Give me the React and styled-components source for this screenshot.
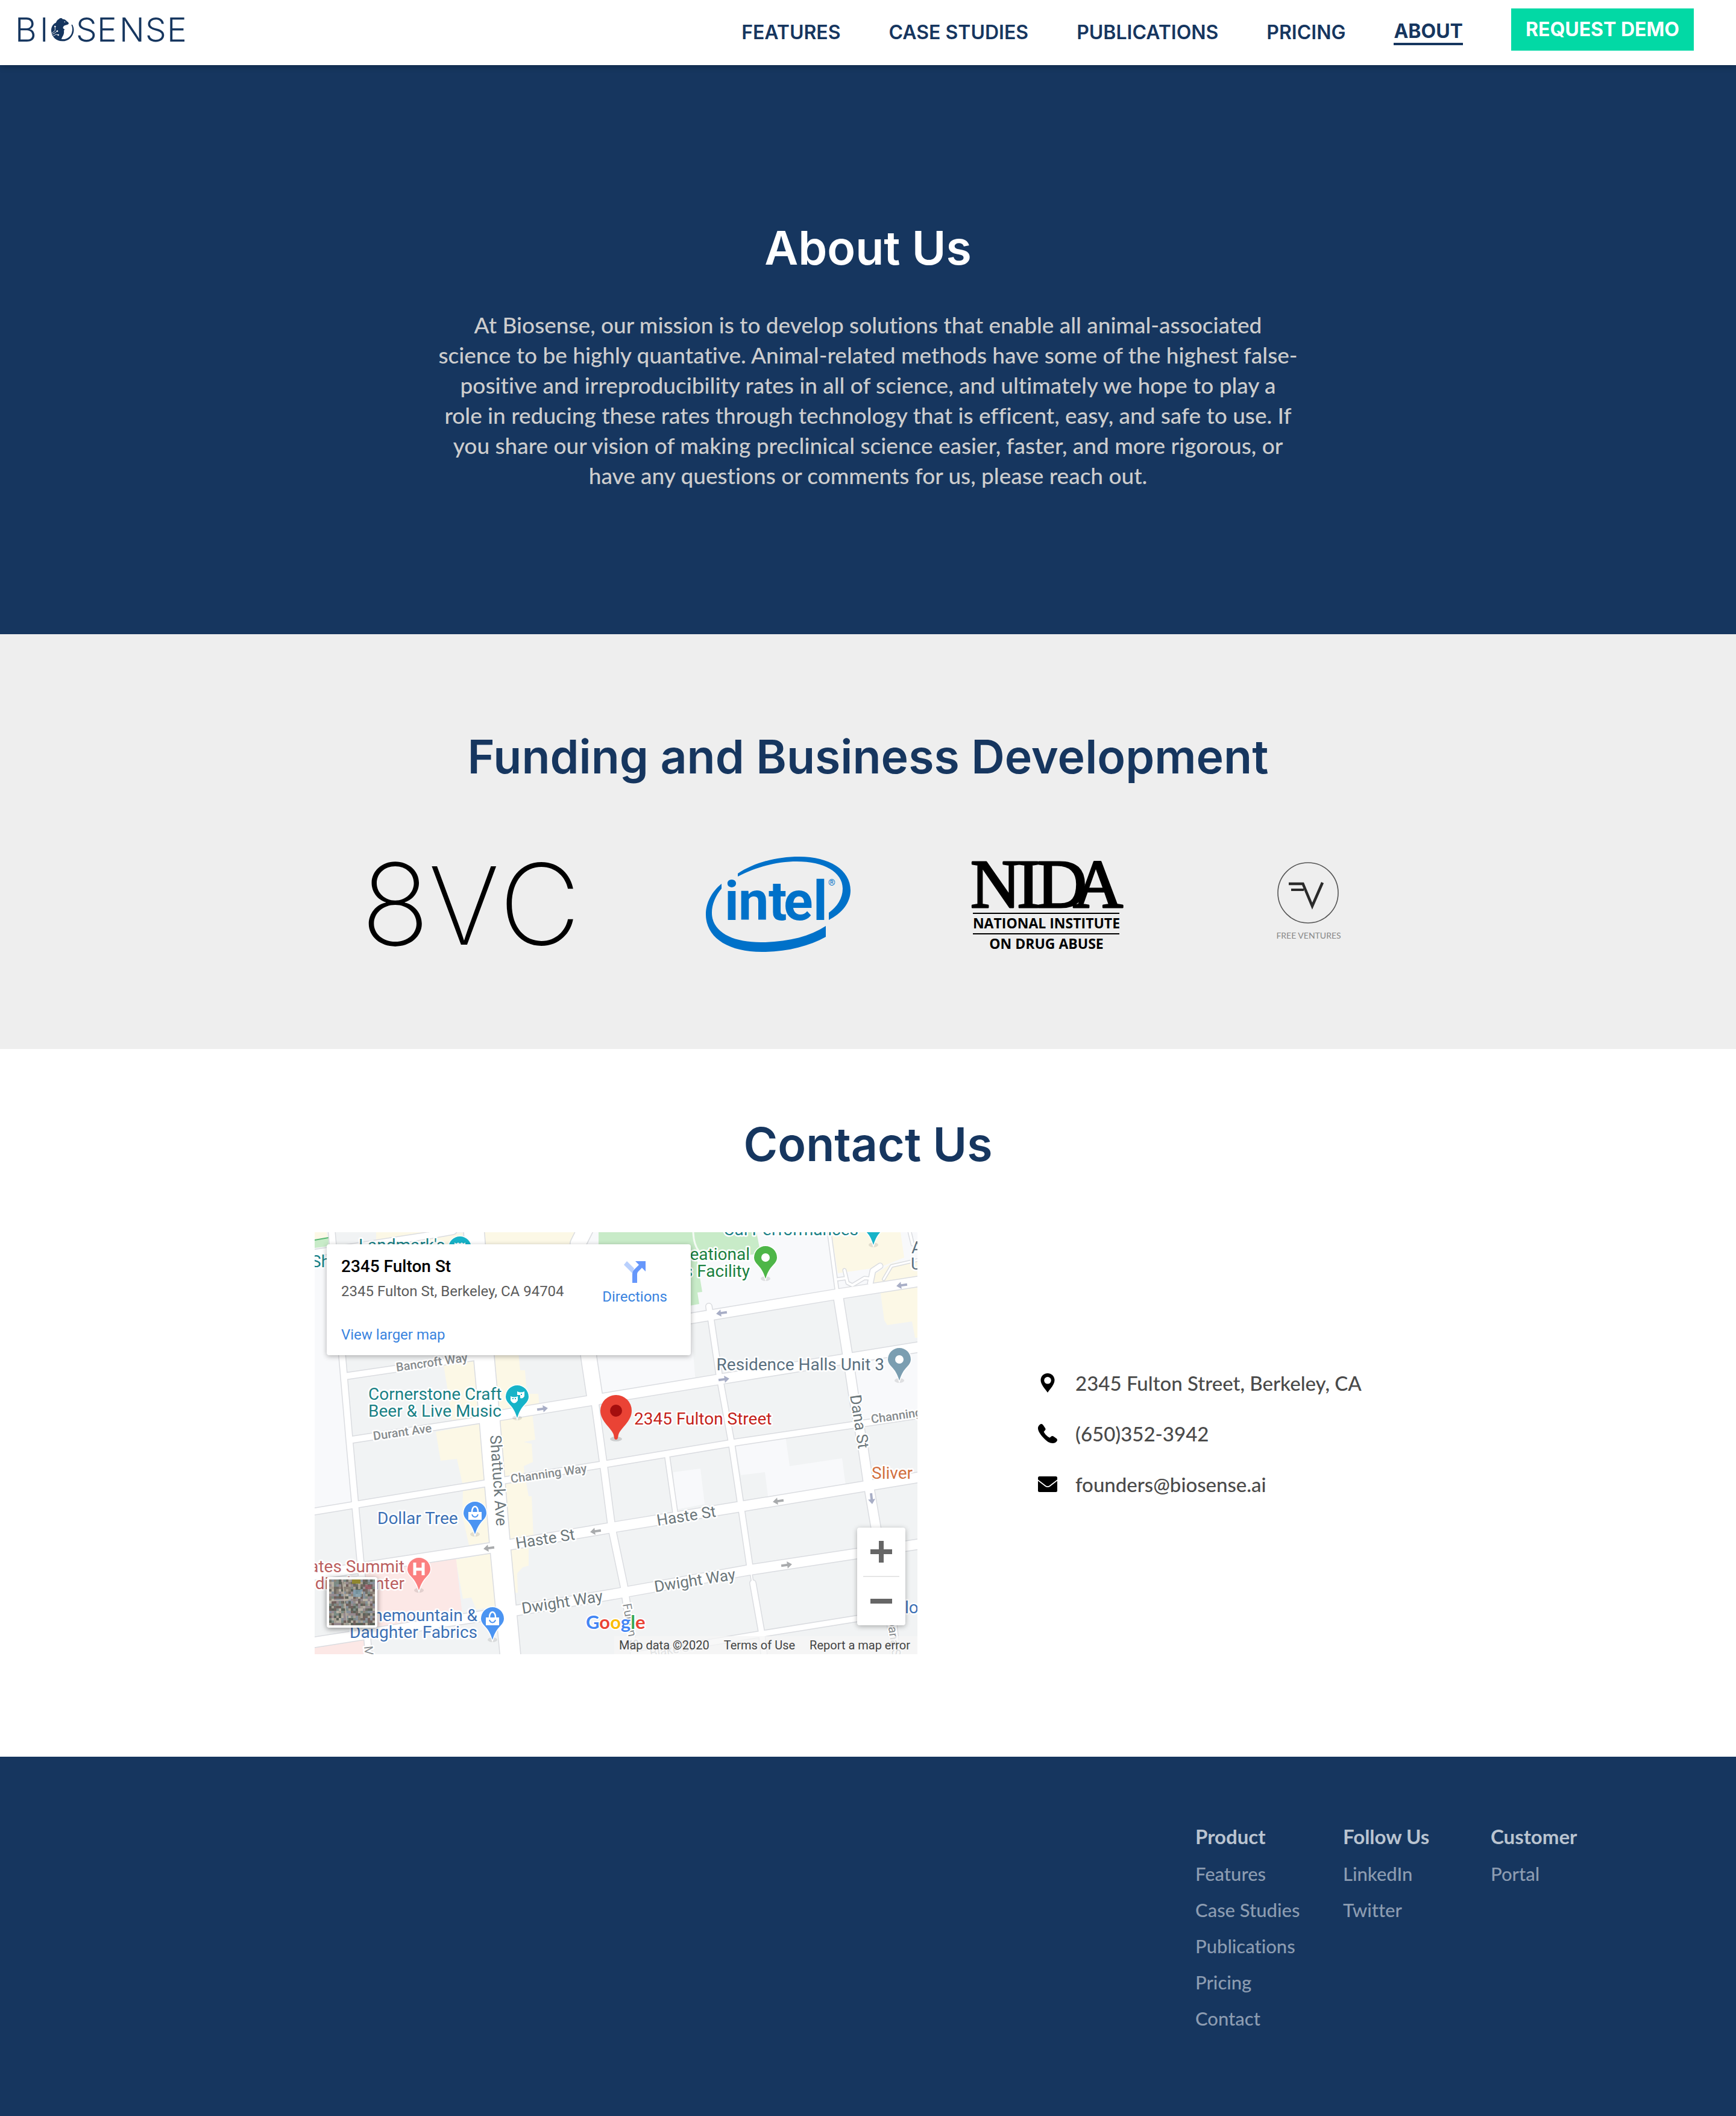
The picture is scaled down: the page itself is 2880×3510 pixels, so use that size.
import React from "react";
import styled, { createGlobalStyle } from "styled-components";

const navy = "#16365f";
const heading = `"Inter", "Liberation Sans", sans-serif`;
const copy = `"Lato", "Liberation Sans", sans-serif`;
const mapFont = `"Roboto", "Liberation Sans", sans-serif`;

const GlobalStyle = createGlobalStyle`
  *, *::before, *::after { box-sizing: border-box; }
  body { margin: 0; background: #fff; font-family: ${copy}; }
  h1, h2, h3, p, ul { margin: 0; padding: 0; }
  ul { list-style: none; }
  a { color: inherit; text-decoration: none; }
`;

const Header = styled.header`
  position: relative;
  z-index: 1;
  display: flex;
  align-items: center;
  justify-content: space-between;
  height: 108px;
  padding: 0 70px 0 20px;
  background: #fff;
  box-shadow: 0 2px 10px rgba(0, 0, 0, 0.25);
`;

const HomeLink = styled.a`
  display: block;
  height: 60px;
  margin-bottom: 8px;
`;

const Nav = styled.nav`
  display: flex;
  align-items: center;
  gap: 80px;
  font: 600 32px/38px ${heading};
  color: ${navy};
`;

const NavLink = styled.a`
  border-bottom: ${(p) => (p.$active ? `4px solid ${navy}` : "0")};
  font-weight: ${(p) => (p.$active ? 700 : 600)};
`;

const DemoButton = styled.button`
  height: 70px;
  margin-bottom: 10px;
  padding: 0 24px;
  border: 0;
  background: #02d9a5;
  color: #fff;
  font: 700 32px/38px ${heading};
`;

const Section = styled.section`
  display: flex;
  flex-direction: column;
  align-items: center;
`;

const Hero = styled(Section)`
  padding: 259px 40px 238px;
  background: ${navy};
`;

const Funding = styled(Section)`
  padding: 159px 40px 160px;
  background: #eee;
`;

const Contact = styled(Section)`
  padding: 114px 40px 170px;
`;

const Title = styled.h2`
  color: ${(p) => (p.$light ? "#fff" : navy)};
  font: 600 77px/88px ${heading};
  text-align: center;
`;

const Mission = styled.p`
  margin-top: 59px;
  color: #cdcdcd;
  font: 500 37px/50px ${copy};
  font-variant-ligatures: none;
  text-align: center;
`;

const Logos = styled.div`
  display: flex;
  flex-wrap: wrap;
  justify-content: center;
  gap: 40px 200px;
  margin-top: 121px;
  svg { display: block; overflow: visible; }
`;

const ContactRow = styled.div`
  display: flex;
  align-items: center;
  gap: 200px;
  width: 100%;
  max-width: 1836px;
  margin-top: 102px;
`;

const ContactList = styled.ul`
  display: grid;
  gap: 44px;
  padding-bottom: 32px;
  color: #4a4a4a;
  font: 500 33px/40px ${copy};
  font-variant-ligatures: none;
`;

const ContactItem = styled.li`
  display: flex;
  align-items: center;
  gap: 30px;
  svg { flex: none; }
`;

const Footer = styled.footer`
  display: flex;
  justify-content: flex-end;
  padding: 112px 162px 132px;
  background: ${navy};
`;

const FooterColumns = styled.div`
  display: grid;
  grid-template-columns: repeat(3, 245px);
`;

const FooterHeading = styled.h3`
  margin-bottom: 12px;
  color: #bac4d0;
  font: 700 33px/40px ${copy};
`;

const FooterLink = styled.a`
  display: block;
  color: #8c9cb1;
  font: 500 31px/60px ${copy};
  font-variant-ligatures: none;
`;

/* ---- map ---- */

const MapFrame = styled.div`
  position: relative;
  flex: 0 0 1000px;
  height: 700px;
  overflow: hidden;
  background: #f1f3f4;
  font-family: ${mapFont};
`;

const MapCard = styled.div`
  position: absolute;
  top: 20px;
  left: 20px;
  display: flex;
  justify-content: space-between;
  width: 604px;
  height: 184px;
  padding: 20px 39px 10px 24px;
  border-radius: 4px;
  background: #fff;
  box-shadow: 0 2px 8px rgba(0, 0, 0, 0.3);
`;

const Place = styled.div`
  display: flex;
  flex-direction: column;
`;

const PlaceName = styled.h3`
  color: #000;
  font: 500 28px/34px ${mapFont};
`;

const PlaceAddress = styled.p`
  margin-top: 8px;
  color: #5b5b5b;
  font: 400 24px/32px ${mapFont};
`;

const MapLink = styled.a`
  color: #3a84df;
  font: 400 24px/32px ${mapFont};
`;

const LargerMap = styled(MapLink)`
  margin-top: 40px;
`;

const Directions = styled(MapLink)`
  display: flex;
  flex-direction: column;
  align-items: center;
  gap: 7px;
  padding-top: 8px;
`;

const ZoomBox = styled.div`
  position: absolute;
  right: 20px;
  bottom: 48px;
  display: flex;
  flex-direction: column;
  align-items: center;
  width: 80px;
  border-radius: 4px;
  background: #fff;
  box-shadow: 0 2px 8px rgba(0, 0, 0, 0.3);
`;

const ZoomButton = styled.button`
  display: grid;
  place-items: center;
  width: 80px;
  height: 80px;
  padding: 0;
  border: 0;
  background: none;
`;

const ZoomRule = styled.span`
  width: 60px;
  height: 2px;
  background: #e6e6e6;
`;

const Satellite = styled.button`
  position: absolute;
  left: 20px;
  bottom: 44px;
  width: 84px;
  height: 84px;
  padding: 0;
  overflow: hidden;
  border: 4px solid #fff;
  border-radius: 4px;
  background: #877f76;
  box-shadow: 0 2px 10px rgba(0, 0, 0, 0.45);
  svg { display: block; }
`;

const Attribution = styled.div`
  position: absolute;
  right: 0;
  bottom: 0;
  display: flex;
  gap: 24px;
  padding: 0 12px 0 8px;
  background: rgba(245, 245, 245, 0.75);
  color: #444;
  font: 400 20px/30px ${mapFont};
`;

const BiosenseLogo = () => (
  <svg width="300" height="60" viewBox="20 20 300 60" role="img" aria-label="Biosense">
    <text x="25 66 126 161 198 241 277" y="69" fontFamily="Inter" fontWeight="300" fontSize="55" fill={navy}>
      BISENSE
    </text>
    <g transform="translate(85 30) scale(.3333)">
      <path
        fill={navy}
        d="M37 6C42-2 53-2 57 5c11 0 17 6 22 12 5 2 8 6 8 10-1 5-8 6-15 8-8 2-12 6-13 11-1 4 0 7 5 8 3 2 2 6-1 8 2 10-1 21-6 29-4 7-5 11-6 14 26 2 44-11 51-31 5-14 4-29-2-40l5-2c8 15 10 32 3 48-9 22-29 36-53 35C25 115 2 94 0 64-1 43 10 28 23 23 27 15 31 8 37 6Z"
      />
      <g stroke="#fff" strokeWidth="2.6" fill="none">
        <path d="M19 43V62L3 75M29 65L18 74 6 80M34 83L24 81 10 89" />
      </g>
      <circle cx="19" cy="42" r="4" fill="#fff" />
      <circle cx="30" cy="65" r="4" fill="#fff" />
      <circle cx="35" cy="84" r="4" fill="#fff" />
      <circle cx="67" cy="19" r="2.5" fill="#fff" />
    </g>
  </svg>
);

const EightVC = () => (
  <svg width="372" height="160" viewBox="600 1420 372 160" role="img" aria-label="8VC">
    <g fontFamily="Inter" fontWeight="200">
      <text x="600" y="1568" fontSize="188">8</text>
      <text x="712" y="1567" fontSize="179">V</text>
      <text x="829" y="1567" fontSize="186">C</text>
    </g>
  </svg>
);

const Intel = () => (
  <svg width="240" height="160" viewBox="0 -1 240 160" fill="#0071c9" role="img" aria-label="Intel">
    <path d="M53 28C80 10 116 0 155 0c50 0 85 22 85 56 0 20-14 38-36 49V93c14-10 23-24 23-40 0-28-32-45-76-45-35 0-70 10-98 25Z" />
    <path d="M26 45v8C16 65 10 79 10 93c0 32 34 49 81 49 43 0 80-9 108-27v18c-29 16-65 25-106 25C35 158 0 133 0 96 0 76 10 58 26 45Z" />
    <text x="31 54 104 129 178" y="105" fontFamily="Roboto" fontWeight="700" fontSize="90">
      intel
    </text>
    <text x="203" y="48" fontFamily="Roboto" fontSize="15">®</text>
  </svg>
);

const Nida = () => (
  <svg width="250" height="160" viewBox="1612 1420 250 160" role="img" aria-label="NIDA">
    <text
      x="1611 1688 1721 1781"
      y="1505"
      fontFamily="Liberation Serif"
      fontSize="115"
      stroke="#000"
      strokeWidth="3"
      strokeLinejoin="round"
    >
      NIDA
    </text>
    <rect x="1615" y="1514" width="243" height="2" />
    <rect x="1615" y="1548" width="243" height="2" />
    <g fontFamily="Open Sans" fontWeight="700" fontSize="23" textAnchor="middle">
      <text x="1737" y="1540">NATIONAL INSTITUTE</text>
      <text x="1737" y="1574">ON DRUG ABUSE</text>
    </g>
  </svg>
);

const FreeVentures = () => (
  <svg width="220" height="160" viewBox="2062 1420 220 160" role="img" aria-label="Free Ventures">
    <circle cx="2171" cy="1481" r="50" fill="none" stroke="#555" strokeWidth="1.6" />
    <g fill="none" stroke="#2b2b2b" strokeWidth="4.5">
      <path d="M2139 1466h23.500L2178 1503L2195 1464" />
      <path d="M2143 1476h21" strokeWidth="4" />
    </g>
    <text x="2172" y="1557" textAnchor="middle" fontFamily="Lato" fontSize="14" fill="#888">
      FREE VENTURES
    </text>
  </svg>
);

const PinIcon = () => (
  <svg width="32" height="32" viewBox="0 0 32 32" aria-hidden="true">
    <path fillRule="evenodd" d="M16 0C9.500 0 4.500 5 4.500 11.300 4.500 18.500 11 25 16 32c5-7 11.500-13.500 11.500-20.700C27.500 5 22.500 0 16 0Zm0 6a5.800 5.800 0 1 1 0 11.600A5.800 5.800 0 0 1 16 6Z" />
  </svg>
);

const PhoneIcon = () => (
  <svg width="32" height="32" viewBox="0 0 32 32" aria-hidden="true">
    <path d="M1 3.500C2.500 1.500 4 0 5.500 0 7 0 8 1.200 9 2.500l3 4.500c.9 1.500.7 2.700-.4 3.800l-2 2.200c1.500 3 3 4.700 5 6.600 2 1.800 3 2.500 5 3.200l2.300-2c1.200-1 2.600-1 4 0l4.500 3.300c1.800 1.400 2 3 .8 4.600C29.500 31 27 32 24.500 32c-5 0-10-3-14.500-8C5 19 0 12 0 7.500 0 6 .2 4.600 1 3.500Z" />
  </svg>
);

const MailIcon = () => (
  <svg width="32" height="32" viewBox="0 0 32 32" aria-hidden="true">
    <rect y="3" width="32" height="26" rx="2.500" />
    <path d="M-1 8.500 12.500 19q3.500 2.400 7 0L33 8.500" fill="none" stroke="#fff" strokeWidth="1.800" />
  </svg>
);

const roads = [
  { w: 12, pts: "-5,35 191,5 230,-2" },
  { w: 12, pts: "28,-5 46,209 58,349 67,449 76,546 90,705" },
  { w: 35, pts: "264,-5 281,209 290,309 307,513 325,705" },
  { w: 27, pts: "449,-5 437,19 445,130 455,209 465,275" },
  { w: 13, pts: "464,275 480,391 493,491 513,586 531,705" },
  { w: 11, pts: "654,123 658,148 671,236 691,346 706,446 723,562" },
  { w: 4, pts: "724,565 727,585" },
  { w: 11, pts: "727,582 741,661 746,705" },
  { w: 7, pts: "853,-5 867,100" },
  { w: 17, pts: "868,103 884,203 895,276 910,359 918,413 931,489 952,600 964,705" },
  { w: 9, pts: "585,373 598,464" },
  { w: 6, pts: "868,78 882,76 879,63 884,84 892,88 912,76 924,77" },
  { w: 10, pts: "922,84 926,64 938,56" },
  { w: 5, pts: "944,78 957,56 1005,45" },
  { w: 6, pts: "986,-5 992,20" },
  { w: 12, pts: "50,239 281,205" },
  { w: 18, pts: "281,196 624,143 865,103 1005,81" },
  { w: 12, pts: "63,344 290,309" },
  { w: 18, pts: "300,305 665,245 1005,190" },
  { w: 12, pts: "-5,464 281,417 498,382 696,349 1005,303" },
  { w: 18, pts: "-5,569 290,524 498,489 701,456 1005,406" },
  { w: 18, pts: "-5,681 301,633 498,600 716,561 1005,517" },
  { w: 11, pts: "540,700 743,666 1005,624" },
];

const areas = [
  ["#f8f9fb", "0,50 32,46 62,449 0,460"],
  ["#f8f9fb", "282,0 1000,0 1000,82 624,143 282,196"],
  ["#f8f9fb", "455,180 624,150 632,250 465,275"],
  ["#f8f9fb", "884,210 1000,191 1000,304 900,320"],
  ["#f8f9fb", "595,398 640,392 647,451 600,460"],
  ["#f8f9fb", "698,350 781,338 788,388 875,375 881,420 753,445 747,398 707,403"],
  ["#c8ebc8", "0,12 23,9 23,23 0,26"],
  ["#fcf8e6", "0,0 20,0 22,9 0,12"],
  ["#fcf8e6", "102,0 230,0 102,14"],
  ["#fcf8e6", "158,13 245,1 247,30 158,30"],
  ["#fcf8e6", "282,0 433,0 423,30 282,30"],
  ["#c8ebc8", "471,0 733,0 740,36 634,44 643,99 635,100 638,119 600,126 471,130"],
  ["#fcf8e6", "214,221 263,210 275,309 228,312 222,270"],
  ["#fcf8e6", "201,331 273,318 281,411 245,416 236,376 209,379"],
  ["#fcf8e6", "246,429 282,424 289,514 256,519 245,470"],
  ["#fcf8e6", "234,543 292,533 300,621 268,626 260,606 246,608"],
  ["#fcf8e6", "299,200 338,200 341,229 349,229 352,268 371,268 373,290 303,300"],
  ["#fcf8e6", "303,314 361,300 366,344 347,348 360,351 362,381 347,388 348,402 310,410"],
  ["#fcf8e6", "312,419 350,410 355,438 360,438 363,505 320,513"],
  ["#fcf8e6", "322,520 355,515 355,553 345,556 336,566 337,598 330,598"],
  ["#fcf8e6", "857,0 972,0 978,42 938,58 868,68"],
  ["#fcf8e6", "925,72 957,52 1000,44 1000,78 930,90"],
  ["#fcf8e6", "938,95 1000,85 1000,175 996,175 991,148 950,154 945,146"],
  ["#fce8e6", "80,565 234,536 245,635 90,660"],
  ["#fce8e6", "0,688 82,672 82,700 0,700"],
];

const labels = [
  { t: "Landmark's", x: 73, y: 31, c: "#188085" },
  { t: "Sh", x: -6, y: 58, c: "#188085" },
  { t: "Cal Performances", x: 902, y: 5, c: "#188085", a: "end" },
  { t: "Recreational", x: 722, y: 46, c: "#1b8040", a: "end" },
  { t: "Sports Facility", x: 722, y: 74, c: "#1b8040", a: "end" },
  { t: "A", x: 990, y: 35, c: "#5a7080" },
  { t: "U", x: 989, y: 62, c: "#5a7080" },
  { t: "Residence Halls Unit 3", x: 945, y: 229, c: "#5a7080", a: "end" },
  { t: "2345 Fulton Street", x: 530, y: 319, c: "#c4221b" },
  { t: "Cornerstone Craft", x: 89, y: 278, c: "#188085" },
  { t: "Beer & Live Music", x: 89, y: 306, c: "#188085" },
  { t: "Sliver", x: 924, y: 409, c: "#d2703f" },
  { t: "Dollar Tree", x: 104, y: 484, c: "#3b70b5" },
  { t: "ates Summit", x: 149, y: 564, c: "#bb5f5f", a: "end" },
  { t: "dical Center", x: 149, y: 592, c: "#bb5f5f", a: "end" },
  { t: "Stonemountain &", x: 270, y: 645, c: "#3b70b5", a: "end" },
  { t: "Daughter Fabrics", x: 270, y: 673, c: "#3b70b5", a: "end" },
  { t: "lo", x: 979, y: 632, c: "#3b70b5" },
  { t: "Bancroft Way", x: 136, y: 231, c: "#868b8e", s: 20, r: -8, w: 500 },
  { t: "Durant Ave", x: 98, y: 345, c: "#868b8e", s: 20, r: -8, w: 500 },
  { t: "Channing Way", x: 326, y: 416, c: "#868b8e", s: 20, r: -8, w: 500 },
  { t: "Channing", x: 924, y: 317, c: "#868b8e", s: 20, r: -8, w: 500 },
  { t: "Haste St", x: 335, y: 525, c: "#6c777b", s: 26, r: -9 },
  { t: "Haste St", x: 569, y: 487, c: "#6c777b", s: 26, r: -9 },
  { t: "Dwight Way", x: 345, y: 633, c: "#6c777b", s: 26, r: -9 },
  { t: "Dwight Way", x: 565, y: 597, c: "#6c777b", s: 26, r: -9 },
  { t: "Shattuck Ave", x: 291, y: 337, c: "#6c777b", s: 26, r: 86 },
  { t: "Dana St", x: 888, y: 271, c: "#6c777b", s: 26, r: 81 },
  { t: "Dana St", x: 950, y: 642, c: "#868b8e", s: 20, r: 82 },
  { t: "Fulton St", x: 511, y: 617, c: "#868b8e", s: 20, r: 80 },
  { t: "Blake St", x: 557, y: 705, c: "#a0a4a6", s: 20, r: -9 },
  { t: "Milvia St", x: 82, y: 687, c: "#868b8e", s: 20, r: 84 },
];

const arrows = [
  [378, 293, -8, "#a8aec6"],
  [675, 134, 172, "#a8aec6"],
  [974, 88, 172, "#a8aec6"],
  [679, 244, -8, "#a8aec6"],
  [289, 524, 172, "#a9abad"],
  [466, 496, 172, "#a9abad"],
  [769, 446, 172, "#a9abad"],
  [783, 552, -8, "#a9abad"],
  [924, 442, 84, "#a8aec6"],
];

const pinPath = "M0 54C-3 45-6 38-13 31-17 27-19 23-19 19a19 19 0 0 1 38 0c0 4-2 8-6 12C6 38 3 45 0 54Z";

const dot = <circle cy="19" r="7" fill="#fff" />;
const bag = (
  <>
    <path d="M-11 17H11V30H-11Z" fill="#fff" />
    <path d="M-5 17c0-12 10-12 10 0" fill="none" stroke="#fff" strokeWidth="2.500" />
    <path d="M-5 21c2 6 8 6 10 0" fill="none" stroke="#4b94f2" strokeWidth="2" />
  </>
);
const masks = (
  <>
    <path d="M0 10q6 3 12 0v8q-3 5-7 3v-5H0Z" fill="#fff" />
    <path d="M-11 18q6 3 12 0v7q-6 9-12 0Z" fill="#fff" />
    <path d="M-8 22h2M-4 22h2M6 15h2" stroke="#17b3c8" strokeWidth="2" />
  </>
);
const stage = <path d="M-9 10l3 2 3-2 3 2 3-2 3 2 3-2v14H-9Z" fill="#fff" />;
const hospital = <path d="M-7 8V29M7 8V29M-7 19H7" stroke="#fff" strokeWidth="5" />;

const pins = [
  [241, 7, "#17b3c8", stage],
  [336, 254, "#17b3c8", masks],
  [927, -33, "#17b3c8", stage],
  [748, 23, "#4eb648", dot],
  [970, 192, "#7b9eb1", dot],
  [266, 447, "#4b94f2", bag],
  [295, 622, "#4b94f2", bag],
  [173, 540, "#fb8080", hospital],
];

const googleLetters = [
  ["G", "#4285f4"],
  ["o", "#ea4335"],
  ["o", "#fbbc05"],
  ["g", "#4285f4"],
  ["l", "#34a853"],
  ["e", "#ea4335"],
];

const MapDrawing = () => (
  <svg width="1000" height="700" viewBox="0 0 1000 700" role="img" aria-label="Map around 2345 Fulton Street">
    <rect width="1000" height="700" fill="#f1f3f4" />
    {areas.map(([fill, points], i) => (
      <polygon key={i} points={points} fill={fill} />
    ))}
    <path d="M0 13 23 9" stroke="#58b874" strokeWidth="2" />
    <path d="M628 0q1 22 10 32" stroke="#f4faf4" strokeWidth="3" fill="none" />
    <g fill="none" stroke="#dadce0" strokeLinejoin="round" strokeLinecap="round">
      {roads.map((r, i) => (
        <polyline key={i} points={r.pts} strokeWidth={r.w + 1} />
      ))}
    </g>
    <g fill="none" stroke="#fff" strokeLinejoin="round" strokeLinecap="round">
      {roads.map((r, i) => (
        <polyline key={i} points={r.pts} strokeWidth={r.w - 2} />
      ))}
    </g>
    {arrows.map(([x, y, r, c], i) => (
      <path key={i} transform={`translate(${x} ${y}) rotate(${r})`} fill={c} d="M-9-2H1V-6L9 0 1 6V2H-9Z" />
    ))}
    <g fontFamily={mapFont} stroke="#fff" strokeWidth="5" strokeLinejoin="round" paintOrder="stroke">
      {labels.map((l, i) => (
        <text
          key={i}
          transform={`translate(${l.x} ${l.y}) rotate(${l.r || 0})`}
          textAnchor={l.a || "start"}
          fontSize={l.s || 28}
          fontWeight={l.w || 400}
          fill={l.c}
        >
          {l.t}
        </text>
      ))}
    </g>
    {pins.map(([x, y, fill, glyph], i) => (
      <g key={i} transform={`translate(${x} ${y})`}>
        <ellipse cy="54" rx="8" ry="4" fill="#000" opacity=".1" />
        <path d={pinPath} fill={fill} stroke="#fff" strokeWidth="3" paintOrder="stroke" />
        {glyph}
      </g>
    ))}
    <ellipse cx="500" cy="343" rx="10" ry="4" fill="#000" opacity=".15" />
    <path
      fill="#ea4335"
      d="M500 344c-3 0-3-3-4-8-3-11-22-22-22-40a26 26 0 0 1 52 0c0 18-19 29-22 40-1 5-1 8-4 8Z"
    />
    <circle cx="500" cy="296" r="10" fill="#a50e0e" />
    <text x="450" y="658" fontFamily="Lato" fontWeight="700" fontSize="31" stroke="#fff" strokeWidth="4" paintOrder="stroke">
      {googleLetters.map(([ch, fill], i) => (
        <tspan key={i} fill={fill}>{ch}</tspan>
      ))}
    </text>
  </svg>
);

const tones = ["#8b8378", "#6f6a63", "#a79f93", "#5c6259", "#958a8f", "#7c8a84", "#b6b0a4", "#70605c", "#87909a"];
const tiles = Array.from({ length: 361 }, (_, i) => {
  const noise = Math.sin(i * 12.9898) * 43758.5453;
  return {
    x: (i % 19) * 4,
    y: Math.floor(i / 19) * 4,
    fill: tones[Math.floor((noise - Math.floor(noise)) * tones.length)],
  };
});

const SatelliteView = () => (
  <svg width="76" height="76" viewBox="0 0 76 76" aria-hidden="true">
    {tiles.map((t) => (
      <rect key={`${t.x}-${t.y}`} x={t.x} y={t.y} width="4" height="4" fill={t.fill} />
    ))}
    <rect x="38" y="0" width="14" height="7" fill="#8f8630" />
    <rect x="40" y="17" width="14" height="12" fill="#7fa3b5" opacity=".7" />
    <rect x="60" y="9" width="10" height="7" fill="#a05562" opacity=".7" />
    <path d="M0 36 36 33M22 0 30 76" stroke="#b9b2a6" strokeWidth="1.500" />
  </svg>
);

const Map = () => (
  <MapFrame>
    <MapDrawing />
    <MapCard>
      <Place>
        <PlaceName>2345 Fulton St</PlaceName>
        <PlaceAddress>2345 Fulton St, Berkeley, CA 94704</PlaceAddress>
        <LargerMap href="#map">View larger map</LargerMap>
      </Place>
      <Directions href="#directions">
        <svg width="36" height="36" viewBox="0 0 36 36" aria-hidden="true">
          <path d="M0 6 5 0 17 12 14 20Z" fill="#b9d0fd" />
          <path d="M14 36V22c0-4 1-6 4-9l7-7-6-6H36V17l-6-6-6 6c-2 2-2 4-2 6v13Z" fill="#6697fb" />
        </svg>
        Directions
      </Directions>
    </MapCard>
    <Satellite aria-label="Show satellite imagery">
      <SatelliteView />
    </Satellite>
    <ZoomBox>
      <ZoomButton aria-label="Zoom in">
        <svg width="36" height="36" viewBox="0 0 36 36" aria-hidden="true">
          <path d="M0 18H36M18 0V36" stroke="#666" strokeWidth="8" />
        </svg>
      </ZoomButton>
      <ZoomRule />
      <ZoomButton aria-label="Zoom out">
        <svg width="36" height="36" viewBox="0 0 36 36" aria-hidden="true">
          <path d="M0 18H36" stroke="#666" strokeWidth="8" />
        </svg>
      </ZoomButton>
    </ZoomBox>
    <Attribution>
      <span>Map data ©2020</span>
      <a href="#terms">Terms of Use</a>
      <a href="#report">Report a map error</a>
    </Attribution>
  </MapFrame>
);

const navItems = ["FEATURES", "CASE STUDIES", "PUBLICATIONS", "PRICING", "ABOUT"];

const missionLines = [
  "At Biosense, our mission is to develop solutions that enable all animal-associated",
  "science to be highly quantative. Animal-related methods have some of the highest false-",
  "positive and irreproducibility rates in all of science, and ultimately we hope to play a",
  "role in reducing these rates through technology that is efficent, easy, and safe to use. If",
  "you share our vision of making preclinical science easier, faster, and more rigorous, or",
  "have any questions or comments for us, please reach out.",
];

const footerColumns = [
  ["Product", ["Features", "Case Studies", "Publications", "Pricing", "Contact"]],
  ["Follow Us", ["LinkedIn", "Twitter"]],
  ["Customer", ["Portal"]],
];

export default function App() {
  return (
    <>
      <GlobalStyle />
      <Header>
        <HomeLink href="#home">
          <BiosenseLogo />
        </HomeLink>
        <Nav>
          {navItems.map((item) => (
            <NavLink key={item} href="#" $active={item === "ABOUT"}>
              {item}
            </NavLink>
          ))}
          <DemoButton>REQUEST DEMO</DemoButton>
        </Nav>
      </Header>
      <main>
        <Hero>
          <Title as="h1" $light>About Us</Title>
          <Mission>
            {missionLines.map((line) => (
              <React.Fragment key={line}>
                {line}
                <br />
              </React.Fragment>
            ))}
          </Mission>
        </Hero>
        <Funding>
          <Title>Funding and Business Development</Title>
          <Logos>
            <EightVC />
            <Intel />
            <Nida />
            <FreeVentures />
          </Logos>
        </Funding>
        <Contact>
          <Title>Contact Us</Title>
          <ContactRow>
            <Map />
            <ContactList>
              <ContactItem>
                <PinIcon />
                2345 Fulton Street, Berkeley, CA
              </ContactItem>
              <ContactItem>
                <PhoneIcon />
                <a href="tel:+16503523942">(650)352-3942</a>
              </ContactItem>
              <ContactItem>
                <MailIcon />
                <a href="mailto:founders@biosense.ai">founders@biosense.ai</a>
              </ContactItem>
            </ContactList>
          </ContactRow>
        </Contact>
      </main>
      <Footer>
        <FooterColumns>
          {footerColumns.map(([title, links]) => (
            <div key={title}>
              <FooterHeading>{title}</FooterHeading>
              {links.map((link) => (
                <FooterLink key={link} href="#">
                  {link}
                </FooterLink>
              ))}
            </div>
          ))}
        </FooterColumns>
      </Footer>
    </>
  );
}
